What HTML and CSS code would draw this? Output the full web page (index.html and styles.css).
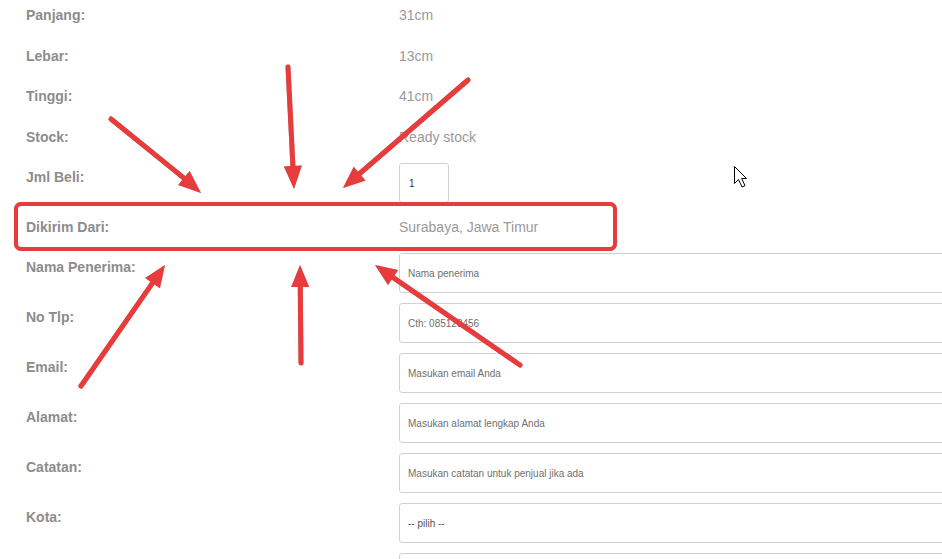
FILE: index.html
```html
<!DOCTYPE html>
<html lang="id">
<head>
<meta charset="utf-8">
<title>Form Pesanan</title>
<link rel="stylesheet" href="styles.css">
</head>
<body>
<div class="form">
  <div class="row text"><div class="label">Panjang:</div><div class="value">31cm</div></div>
  <div class="row text"><div class="label">Lebar:</div><div class="value">13cm</div></div>
  <div class="row text"><div class="label">Tinggi:</div><div class="value">41cm</div></div>
  <div class="row text"><div class="label">Stock:</div><div class="value">Ready stock</div></div>
  <div class="row field"><div class="label">Jml Beli:</div><div class="value"><input class="input qty" type="text" value="1"></div></div>
  <div class="row ship"><div class="label">Dikirim Dari:</div><div class="value">Surabaya, Jawa Timur</div></div>
  <div class="row field"><div class="label">Nama Penerima:</div><div class="value"><input class="input wide" type="text" placeholder="Nama penerima"></div></div>
  <div class="row field"><div class="label">No Tlp:</div><div class="value"><input class="input wide" type="text" placeholder="Cth: 085123456"></div></div>
  <div class="row field"><div class="label">Email:</div><div class="value"><input class="input wide" type="text" placeholder="Masukan email Anda"></div></div>
  <div class="row field"><div class="label">Alamat:</div><div class="value"><input class="input wide" type="text" placeholder="Masukan alamat lengkap Anda"></div></div>
  <div class="row field"><div class="label">Catatan:</div><div class="value"><input class="input wide" type="text" placeholder="Masukan catatan untuk penjual jika ada"></div></div>
  <div class="row field"><div class="label">Kota:</div><div class="value"><select class="input wide select"><option>-- pilih --</option></select></div></div>
  <div class="row field"><div class="label"></div><div class="value"><input class="input wide" type="text"></div></div>
</div>

<svg class="annot" width="942" height="559" viewBox="0 0 942 559" xmlns="http://www.w3.org/2000/svg">
  <g class="marks">
    <rect x="16" y="204" width="599" height="45" rx="5" ry="5" fill="none" stroke="#e83c3c" stroke-width="4"/>
    <g stroke="#e83c3c" stroke-width="5" stroke-linecap="round" fill="none">
      <line x1="111" y1="119" x2="188.6" y2="181.9"/>
      <line x1="288" y1="67" x2="293.2" y2="172"/>
      <line x1="468" y1="80" x2="355.1" y2="177.5"/>
      <line x1="81" y1="386" x2="155.9" y2="278.1"/>
      <line x1="301" y1="363" x2="300.2" y2="281"/>
      <line x1="520" y1="365" x2="388.2" y2="274.1"/>
    </g>
    <g fill="#e83c3c">
      <polygon points="201,193 178.2,185.1 189.6,171.1"/>
      <polygon points="294,189 283.9,166.5 301.9,165.6"/>
      <polygon points="343,188 353.7,166.8 365.5,180.4"/>
      <polygon points="165,265 159.9,288.2 145.1,278"/>
      <polygon points="300,265 309.2,286.9 291.2,287.1"/>
      <polygon points="375,265 398.2,270.1 388,284.9"/>
    </g>
  </g>
  <path class="cursor" d="M734.5 166.5 L734.5 183.5 L738.5 179.5 L742 187 L745 185.7 L741.7 178.5 L746.5 178.5 Z" fill="#fff" stroke="#000" stroke-width="1"/>
</svg>
</body>
</html>
```

FILE: styles.css
```css
html, body {
  margin: 0;
  padding: 0;
  background: #ffffff;
}

body {
  width: 942px;
  height: 559px;
  overflow: hidden;
  position: relative;
  font-family: "Liberation Sans", Arial, sans-serif;
}

.form {
  box-sizing: border-box;
  width: 942px;
  height: 559px;
  overflow: hidden;
  padding: 1px 0 0 26px;
  display: flex;
  flex-direction: column;
}

.row {
  display: grid;
  grid-template-columns: 373px 1fr;
  align-items: start;
  flex-shrink: 0;
}

.row.text {
  height: 40.5px;
}

.row.field {
  height: 50px;
}

.row.ship {
  height: 40px;
}

.label {
  font-size: 14px;
  font-weight: bold;
  color: #8c8c8c;
  line-height: 20px;
  padding-top: 4px;
  white-space: nowrap;
}

.value {
  font-size: 14px;
  color: #9a9a9a;
  line-height: 20px;
  white-space: nowrap;
  min-width: 0;
}

.row.field .value {
  overflow: hidden;
}

.row.text .value,
.row.ship .value {
  padding-top: 4px;
}

.input {
  box-sizing: border-box;
  height: 40px;
  margin: 0;
  border: 1px solid #cfd1d5;
  border-radius: 3px;
  background: #ffffff;
  font-family: "Liberation Sans", Arial, sans-serif;
  font-size: 10px;
  color: #555555;
  padding: 0 8px;
  outline: none;
  display: block;
}

.input::placeholder {
  color: #6f6f6f;
  opacity: 1;
}

.qty {
  width: 50px;
  padding-left: 9px;
  color: #4a2a2a;
}

.wide {
  width: 560px;
}

.select {
  appearance: none;
  -webkit-appearance: none;
  color: #555555;
}

.annot {
  position: absolute;
  left: 0;
  top: 0;
  pointer-events: none;
}

.marks {
  filter: drop-shadow(0.6px 0.8px 0.6px rgba(60, 60, 60, 0.45));
}
```
